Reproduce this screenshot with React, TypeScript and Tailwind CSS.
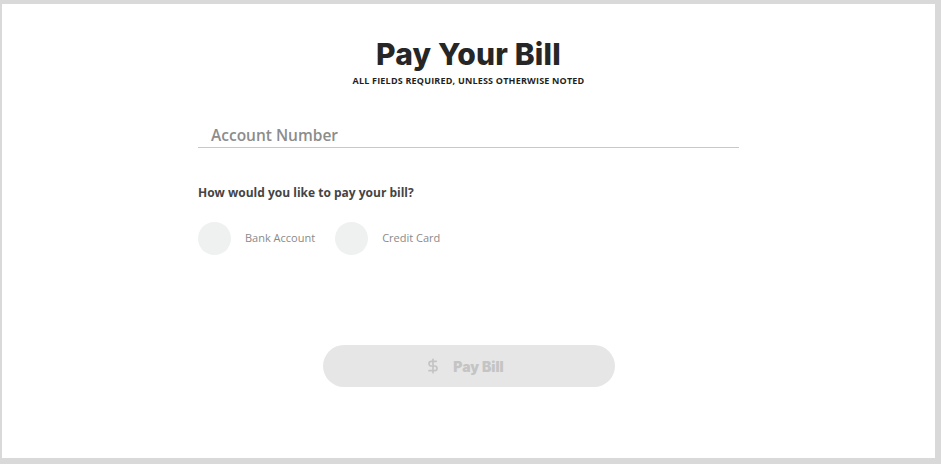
import { DollarSign } from "lucide-react";

const body = { fontFamily: '"Open Sans", "Liberation Sans", sans-serif' };
const display = { fontFamily: 'Inter, "Liberation Sans", sans-serif' };

function Option({ label }: { label: string }) {
  return (
    <label className="flex items-center gap-[14px]">
      <span className="block w-[33px] h-[33px] rounded-full bg-[#eef1f0]" />
      <span className="text-[11px] text-[#8a8a8a]">{label}</span>
    </label>
  );
}

export default function App() {
  return (
    <div className="h-[464px] w-[941px] bg-[#d9d9d9] pt-[4px] pl-[2px] pr-[6px] pb-[6px]" style={body}>
      <div className="h-full bg-white flex flex-col items-center">
        <h1
          className="mt-[34px] text-[30px] leading-[32px] font-extrabold text-[#262626] tracking-[0.2px]"
          style={display}
        >
          Pay Your Bill
        </h1>
        <p className="mt-[5px] text-[9px] leading-[11px] font-bold uppercase text-[#1f1f1f] tracking-[0.2px]">
          All fields required, unless otherwise noted
        </p>

        <div className="w-[541px] mt-[37px]">
          <div className="border-b border-[#c8c8c8] pl-[13px]">
            <span className="text-[15.5px] font-semibold text-[#8c8c8c] leading-[22px]">Account Number</span>
          </div>

          <p className="mt-[37px] text-[12px] font-bold text-[#444] leading-[16px]">
            How would you like to pay your bill?
          </p>

          <div className="mt-[21px] flex items-center gap-[20px]">
            <Option label="Bank Account" />
            <Option label="Credit Card" />
          </div>
        </div>

        <button
          disabled
          className="mt-[90px] w-[292px] h-[42px] rounded-full bg-[#e6e6e6] flex items-center justify-center gap-[12px] pr-[8px] text-[#c4c4c4]"
        >
          <DollarSign size={16} strokeWidth={2.5} />
          <span className="text-[14px] font-black" style={display}>
            Pay Bill
          </span>
        </button>
      </div>
    </div>
  );
}
